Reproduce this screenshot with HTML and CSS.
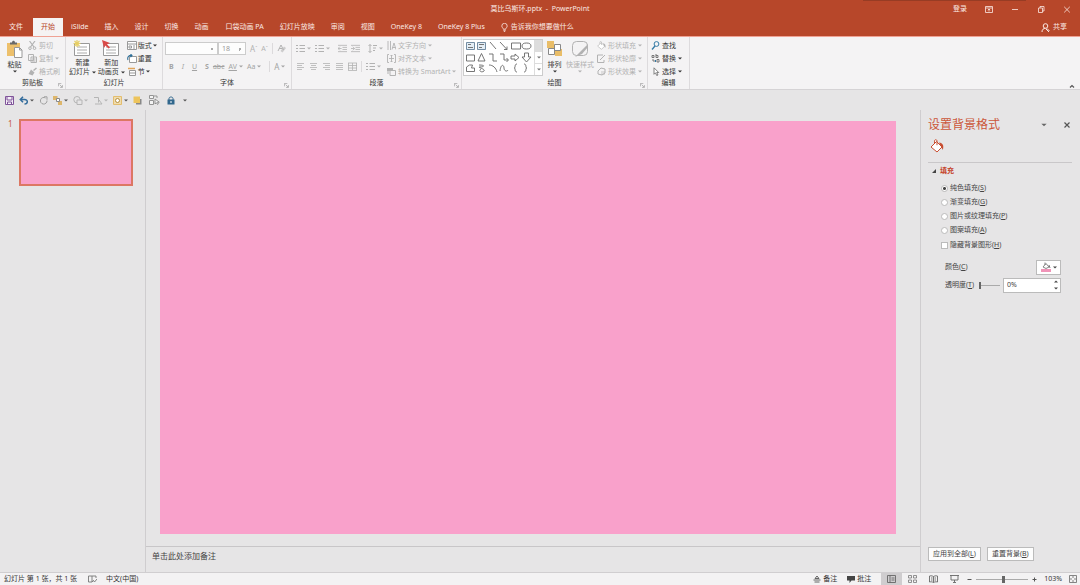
FILE: index.html
```html
<!DOCTYPE html>
<html lang="zh-CN">
<head>
<meta charset="utf-8">
<title>莫比乌斯环.pptx - PowerPoint</title>
<link rel="stylesheet" href="styles.css">
</head>
<body>
<svg class="sprite" aria-hidden="true">
  <symbol id="caret" viewBox="0 0 4 3"><path d="M0 .5h4L2 2.5z" fill="currentColor"/></symbol>
  <symbol id="launch" viewBox="0 0 6 6"><path d="M.5 4V.5H4M2 2l3 3M5.300 2.500v2.800H2.500" fill="none" stroke="currentColor" stroke-width=".8"/></symbol>
  <symbol id="list" viewBox="0 0 9 9"><path d="M0 1.500h2M0 4.500h2M0 7.500h2M3.500 1.500H9M3.500 4.500H9M3.500 7.500H9" fill="none" stroke="currentColor"/></symbol>
  <symbol id="left" viewBox="0 0 9 9"><path d="M1 1.500h7M1 3.500h5M1 5.500h7M1 7.500h5" fill="none" stroke="currentColor" stroke-width=".8"/></symbol>
  <symbol id="center" viewBox="0 0 9 9"><path d="M1 1.500h7M2 3.500h5M1 5.500h7M2 7.500h5" fill="none" stroke="currentColor" stroke-width=".8"/></symbol>
  <symbol id="right" viewBox="0 0 9 9"><path d="M1 1.500h7M3 3.500h5M1 5.500h7M3 7.500h5" fill="none" stroke="currentColor" stroke-width=".8"/></symbol>
  <symbol id="just" viewBox="0 0 9 9"><path d="M1 1.500h7M1 3.500h7M1 5.500h7M1 7.500h7" fill="none" stroke="currentColor" stroke-width=".8"/></symbol>
  <symbol id="dist" viewBox="0 0 9 9"><path d="M0 1h9M0 3.500h9M0 6h9M0 8.500h9M.5 1v7M4.500 1v7M8.500 1v7" fill="none" stroke="currentColor" stroke-width=".8"/></symbol>
  <symbol id="indent" viewBox="0 0 10 9"><path d="M0 1h10M5 3.300h5M5 5.600h5M0 8h10M0 4.500h4M2 2.500l2 2-2 2" fill="none" stroke="currentColor" stroke-width=".9"/></symbol>
  <symbol id="outdent" viewBox="0 0 10 9"><path d="M0 1h10M5 3.300h5M5 5.600h5M0 8h10M0 4.500h4M2 2.500l-2 2 2 2" fill="none" stroke="currentColor" stroke-width=".9"/></symbol>
  <symbol id="bucket" viewBox="0 0 14 14"><path d="M1 8l5.500-5.500L12 8l-5 5zM4.500 4.500V2.200c0-2 2.500-2 2.500 0v4" fill="#fff" stroke="currentColor"/><path d="M9 3.500c4 .5 5 3 3.800 7.500L11 7.500z" fill="currentColor"/></symbol>
  <symbol id="slide" viewBox="0 0 18 17"><path d="M1.500 3.500h15v12h-15z" fill="#fff" stroke="#999"/><path d="M4 7h10M4 10h10M4 13h10" stroke="#aaa"/></symbol>
  <symbol id="shape" viewBox="0 0 9 9"><path d="M1 4l3-3 4 1v4L5 8 1 7z" fill="none" stroke="currentColor"/><path d="M4 4h4v4H4z" fill="currentColor" opacity=".35"/></symbol>
</svg>

<header class="top">
  <div class="titlebar">
    <span class="doc">莫比乌斯环.pptx &nbsp;-&nbsp; PowerPoint</span>
    <div class="window">
      <button>登录</button>
      <button aria-label="功能区显示选项"><svg width="8" height="7" viewBox="0 0 8 7"><path d="M.5.5h7v6h-7zM.5 2h7M4 5.500V3M2.800 4.200L4 3l1.200 1.200" fill="none" stroke="currentColor" stroke-width=".8"/></svg></button>
      <button aria-label="最小化"><svg width="8" height="7" viewBox="0 0 8 7"><path d="M1 3.500h6" stroke="currentColor" stroke-width=".8"/></svg></button>
      <button aria-label="还原"><svg width="8" height="7" viewBox="0 0 8 7"><path d="M1.500 2h4v4.500h-4zM3 2V.5h4V5H5.500" fill="none" stroke="currentColor" stroke-width=".8"/></svg></button>
      <button aria-label="关闭"><svg width="8" height="7" viewBox="0 0 8 7"><path d="M1.200.8l5.600 5.600M6.800.8L1.200 6.400" stroke="currentColor" stroke-width=".8"/></svg></button>
    </div>
  </div>
  <nav class="tabs">
    <a href="#">文件</a><a href="#" class="on">开始</a><a href="#">iSlide</a><a href="#">插入</a><a href="#">设计</a><a href="#">切换</a><a href="#">动画</a><a href="#" class="addin">口袋动画 PA</a><a href="#">幻灯片放映</a><a href="#">审阅</a><a href="#">视图</a><a href="#">OneKey 8</a><a href="#">OneKey 8 Plus</a>
    <a href="#" class="tell"><svg width="7" height="9" viewBox="0 0 7 9"><path d="M2.300 6.200C2.300 5 .8 4.600.8 3a2.700 2.700 0 0 1 5.400 0c0 1.600-1.500 2-1.500 3.200zM2.300 7.300h2.400M2.800 8.500h1.400" fill="none" stroke="currentColor" stroke-width=".8"/></svg>告诉我你想要做什么</a>
    <a href="#" class="share"><svg width="9" height="9" viewBox="0 0 9 9"><circle cx="4.500" cy="3" r="2.300" fill="none" stroke="currentColor"/><path d="M1 9c0-2.500 1.500-3.700 3.500-3.700M5 6l3 3M6 5.500L8.500 8" fill="none" stroke="currentColor"/></svg>共享</a>
  </nav>
</header>

<section class="ribbon">
  <div class="group clip">
    <div class="body">
      <button class="big"><svg width="17" height="18" viewBox="0 0 17 18"><path d="M1 3h13v13H1z" fill="#edc06c"/><path d="M4 4.500V2.500h2C6 0 9 0 9 2.500h2v2z" fill="#696969"/><path d="M8.500 7.500h5l2.500 2.500v7.500H8.500z" fill="#fff" stroke="#999"/><path d="M13.500 7.500V10H16" fill="none" stroke="#999"/></svg><span>粘贴</span><svg class="car"><use href="#caret"/></svg></button>
      <div class="col off">
        <button><svg width="9" height="9" viewBox="0 0 9 9"><path d="M1.500 0L6 6M7 0L2.500 6" stroke="currentColor" stroke-width="1.200"/><circle cx="2" cy="7.200" r="1.300" fill="none" stroke="currentColor"/><circle cx="6.500" cy="7.200" r="1.300" fill="none" stroke="currentColor"/></svg>剪切</button>
        <button><svg width="9" height="9" viewBox="0 0 9 9"><path d="M.5.5h5v6h-5zM3 3h5.500v5.500H3zM4 5h3.500M4 7h3.500" fill="none" stroke="currentColor"/></svg>复制 <svg class="car"><use href="#caret"/></svg></button>
        <button><svg width="9" height="9" viewBox="0 0 9 9"><path d="M8.500 1L5.500 3.500" stroke="currentColor" stroke-width="1.600"/><path d="M3 2.500l3.500 3-2 3L.5 7z" fill="currentColor"/></svg>格式刷</button>
      </div>
    </div>
    <footer>剪贴板<svg class="launch"><use href="#launch"/></svg></footer>
  </div>
  <div class="group slides">
    <div class="body">
      <button class="big"><svg width="18" height="17" viewBox="0 0 18 17"><use href="#slide"/><path d="M4 0v7M.5 3.500h7M1.500 1l5 5M6.500 1l-5 5" stroke="#e7cf65" stroke-width="1.200"/></svg><span>新建<br>幻灯片 <svg class="car"><use href="#caret"/></svg></span></button>
      <button class="big"><svg width="18" height="17" viewBox="0 0 18 17"><use href="#slide"/><path d="M0 0l8 3-3 1.200 3 3.300-1.500 1L3.500 5.500 2 8z" fill="#d94a48"/></svg><span>新加<br>动画页 <svg class="car"><use href="#caret"/></svg></span></button>
      <div class="col">
        <button><svg width="10" height="9" viewBox="0 0 10 9"><path d="M.5.5h9v8h-9zM.5 3h9M2 5h2.500v2H2zM6 5h2M6 7h2" fill="#fff" stroke="#999"/></svg>版式<svg class="car"><use href="#caret"/></svg></button>
        <button><svg width="10" height="9" viewBox="0 0 10 9"><path d="M2.500 2.500h7v6h-7z" fill="#fff" stroke="#999"/><path d="M1 6C0 3 2 1 5 1.500M3.500 0L5 1.500 3.500 3.200" fill="none" stroke="#2f7099" stroke-width="1.100"/></svg>重置</button>
        <button><svg width="10" height="9" viewBox="0 0 10 9"><path d="M2.500 3.500h6v5h-6zM2.500 6h6" fill="#fff" stroke="#999"/><path d="M1 1.500h7" stroke="#e1a45b" stroke-width="1.500"/></svg>节<svg class="car"><use href="#caret"/></svg></button>
      </div>
    </div>
    <footer>幻灯片</footer>
  </div>
  <div class="group font">
    <div class="body stack off">
      <div class="row">
        <select class="face" aria-label="字体"><option></option></select><select class="size" aria-label="字号"><option>18</option></select>
        <button class="lg">A<sup>ˆ</sup></button><button>A<sup>ˇ</sup></button><i class="sep"></i>
        <button aria-label="清除格式"><svg width="9" height="9" viewBox="0 0 9 9"><path d="M1 7l3-6 2.500 5M2 4.500h3" fill="none" stroke="currentColor"/><path d="M3.500 7L7 2.500l2 1.500-3.500 4.500z" fill="currentColor" opacity=".6"/></svg></button>
      </div>
      <div class="row letters">
        <button><b>B</b></button><button><i>I</i></button><button><u>U</u></button><button><b>S</b></button><button><s>abc</s></button><button><u>AV</u><svg class="car"><use href="#caret"/></svg></button><button>Aa<svg class="car"><use href="#caret"/></svg></button><i class="sep"></i><button class="lg">A <svg class="car"><use href="#caret"/></svg></button>
      </div>
    </div>
    <footer>字体<svg class="launch"><use href="#launch"/></svg></footer>
  </div>
  <div class="group para">
    <div class="body off">
      <div class="stack">
        <div class="row">
          <button aria-label="项目符号"><svg class="ic"><use href="#list"/></svg><svg class="car"><use href="#caret"/></svg></button>
          <button aria-label="编号"><svg class="ic"><use href="#list"/></svg><svg class="car"><use href="#caret"/></svg></button><i class="sep"></i>
          <button aria-label="减少缩进"><svg class="ic"><use href="#outdent"/></svg></button>
          <button aria-label="增加缩进"><svg class="ic"><use href="#indent"/></svg></button><i class="sep"></i>
          <button aria-label="行距"><svg width="9" height="9" viewBox="0 0 9 9"><path d="M2 .5v8M.5 2L2 .5 3.500 2M.5 7L2 8.500 3.500 7M5 1.500h4M5 4h3M5 6.500h2" fill="none" stroke="currentColor"/></svg><svg class="car"><use href="#caret"/></svg></button>
        </div>
        <div class="row">
          <button aria-label="左对齐"><svg class="ic"><use href="#left"/></svg></button><button aria-label="居中"><svg class="ic"><use href="#center"/></svg></button><button aria-label="右对齐"><svg class="ic"><use href="#right"/></svg></button><button aria-label="两端对齐"><svg class="ic"><use href="#just"/></svg></button><button aria-label="分散对齐"><svg class="ic"><use href="#dist"/></svg></button><i class="sep"></i><button aria-label="分栏"><svg class="ic"><use href="#list"/></svg><svg class="car"><use href="#caret"/></svg></button>
        </div>
      </div>
      <div class="col">
        <button><svg width="9" height="9" viewBox="0 0 9 9"><path d="M1 0v9M3.500 0v9M5 8.500L7 2l2 6.500M5.500 6.500h3" fill="none" stroke="currentColor" stroke-width=".9"/></svg>文字方向<svg class="car"><use href="#caret"/></svg></button>
        <button><svg width="9" height="9" viewBox="0 0 9 9"><path d="M2 .5H.5v8H2M7 .5h1.500v8H7M2 4.500h5M4.500 1v7M3.500 2l1-1 1 1M3.500 7l1 1 1-1" fill="none" stroke="currentColor" stroke-width=".9"/></svg>对齐文本<svg class="car"><use href="#caret"/></svg></button>
        <button><svg width="9" height="9" viewBox="0 0 9 9"><path d="M0 1h6v3H0z" fill="currentColor"/><path d="M3 4v4.500h5.500V3.500H5M1 4v3" fill="none" stroke="currentColor"/></svg>转换为 SmartArt<svg class="car"><use href="#caret"/></svg></button>
      </div>
    </div>
    <footer>段落<svg class="launch"><use href="#launch"/></svg></footer>
  </div>
  <div class="group draw">
    <div class="body">
      <div class="gallery">
        <svg width="70" height="35" viewBox="0 0 70 35" fill="none" stroke="#666" stroke-width=".9">
          <path d="M2.500 2.500h8v7h-8zM13.500 2.500h8v7h-8z" fill="#e4eef6" stroke="#67829a"/><path d="M4 4.500h3M4 7.500h5M15 4.500h5M15 7.500h3"/>
          <path d="M26 2l6 7M36 2l7 7.500M43 6.500v3h-3M47.500 3h9v6h-9z"/><ellipse cx="62.500" cy="6" rx="4.500" ry="3"/>
          <path d="M2.500 15h8v6h-8zM17.500 13.500L21 21h-7zM25 14h4v7h4M36 14h4v6h4M42.500 18l2 2-2 2M47 16h4v-2l4 3.500-4 3.500v-2h-4zM60.500 13h4v4H67l-4.500 5-4.500-5h2.500z"/>
          <path d="M2.500 31.500V27l3-2h3l-1 3h3v3.500zM15 25c7 0 5 2 1 2s6 2 4 4-6 0-3-2M25 25c4 0 7 3 8 7M36 31c1-8 4-6 4-3s3 4 4 2M53 24c-3 0-1 4-3 4 2 0 0 4 3 4M60 24c3 0 1 4 3 4-2 0 0 4-3 4"/>
        </svg>
        <div class="scroll"><button aria-label="上一行"></button><button aria-label="下一行"><svg class="car"><use href="#caret"/></svg></button><button aria-label="更多"><svg class="car"><use href="#caret"/></svg></button></div>
      </div>
      <button class="big"><svg width="17" height="18" viewBox="0 0 17 18"><path d="M1 1h7v7H1zM9 9h7v7H9z" fill="#e9bd68"/><path d="M8.500 4.500h6v6h-6zM2.500 8.500h6v6h-6z" fill="#fff" stroke="#888"/></svg><span>排列</span><svg class="car"><use href="#caret"/></svg></button>
      <button class="big off"><svg width="18" height="18" viewBox="0 0 18 18"><rect x="1.500" y="1.500" width="15" height="14" rx="4" fill="none" stroke="currentColor"/><path d="M17 4L9 12l-5 5 7-3 6-7z" fill="currentColor"/></svg><span>快速样式</span><svg class="car"><use href="#caret"/></svg></button>
      <div class="col off">
        <button><svg width="9" height="9"><use href="#bucket"/></svg>形状填充<svg class="car"><use href="#caret"/></svg></button>
        <button><svg width="9" height="9" viewBox="0 0 9 9"><path d="M6 1H.5v7.500H7V6M3 6l5-5" fill="none" stroke="currentColor"/></svg>形状轮廓<svg class="car"><use href="#caret"/></svg></button>
        <button><svg width="9" height="9"><use href="#shape"/></svg>形状效果<svg class="car"><use href="#caret"/></svg></button>
      </div>
    </div>
    <footer>绘图<svg class="launch"><use href="#launch"/></svg></footer>
  </div>
  <div class="group edit">
    <div class="body"><div class="col">
      <button><svg width="9" height="9" viewBox="0 0 9 9"><circle cx="5.500" cy="3" r="2.400" fill="none" stroke="#337aa5"/><path d="M4 5L1 8.500" stroke="#337aa5" stroke-width="1.300"/></svg>查找</button>
      <button><svg width="9" height="9" viewBox="0 0 9 9"><path d="M1 3.500V1.500h2v2zM5 0v3.500h2v-2H5M2 5v2h2M6 5.500h2v2.500H6z" fill="none" stroke="#777"/><path d="M4 6l1 1-1 1" stroke="#337aa5" fill="none"/></svg>替换 <svg class="car"><use href="#caret"/></svg></button>
      <button><svg width="9" height="9" viewBox="0 0 9 9"><path d="M3 .8v6.500l1.500-1.500 1.200 2.700L7 8 5.700 5.500h2z" fill="#fff" stroke="#666" stroke-width=".8"/></svg>选择<svg class="car"><use href="#caret"/></svg></button>
    </div></div>
    <footer>编辑</footer>
  </div>
  <button class="collapse" aria-label="折叠功能区"><svg width="6" height="4" viewBox="0 0 6 4"><path d="M1 3.500l2-2 2 2" fill="none" stroke="#555" stroke-width="1.200"/></svg></button>
</section>

<div class="quick">
  <button aria-label="保存"><svg width="9" height="9" viewBox="0 0 9 9"><path d="M.5.500h8v8h-8z" fill="#f4eef7" stroke="#80549a"/><path d="M2 1v3h5V1M2.500 8.500V6h4v2.500" fill="none" stroke="#80549a"/></svg></button>
  <button aria-label="撤消"><svg width="10" height="9" viewBox="0 0 10 9"><path d="M1.500 3.500h4c4 0 3.500 4.500 0 4.500M4 .8L1.300 3.500 4 6.200" fill="none" stroke="#336c9c" stroke-width="1.500"/></svg><svg class="car"><use href="#caret"/></svg></button>
  <button aria-label="重复"><svg width="9" height="9" viewBox="0 0 9 9"><path d="M6.500 2A3.300 3.300 0 1 0 8 4.500M5 .8h3v3" fill="none" stroke="#a0a0a0"/></svg></button>
  <button aria-label="排列"><svg width="10" height="9" viewBox="0 0 10 9"><path d="M0 0h4.500v4H0zM5 5h4v4H5z" fill="#ddb66c"/><path d="M3.500 2.500h3v3h-3z" fill="#fff" stroke="#888"/></svg><svg class="car"><use href="#caret"/></svg></button>
  <button class="off" aria-label="合并形状"><svg width="10" height="9" viewBox="0 0 10 9"><circle cx="4" cy="3.700" r="3.200" fill="none" stroke="currentColor"/><path d="M4 4h5v4.500H4z" fill="#e6e5e6" stroke="currentColor"/></svg><svg class="car"><use href="#caret"/></svg></button>
  <button class="off" aria-label="旋转"><svg width="10" height="9" viewBox="0 0 10 9"><path d="M1 1.500h4.500v5M6 4l3 4H2" fill="none" stroke="currentColor"/></svg><svg class="car"><use href="#caret"/></svg></button>
  <button aria-label="动画"><svg width="10" height="9" viewBox="0 0 10 9"><path d="M.5.5h8v8h-8z" fill="#efdcae" stroke="#e3bd6e"/><circle cx="4.500" cy="4.500" r="2" fill="#fff" stroke="#b7903f"/></svg><svg class="car"><use href="#caret"/></svg></button>
  <button aria-label="置于顶层"><svg width="9" height="9" viewBox="0 0 9 9"><path d="M3 3h5.500v5.500H3z" fill="#888"/><path d="M.5.500h6.500v6.500H.5z" fill="#edc45c"/></svg></button>
  <button aria-label="选择窗格"><svg width="11" height="10" viewBox="0 0 11 10"><path d="M.5.500h4v3h-4zM.5 5.500h4v4h-4zM5 1h3v2M6 4v5l1.300-1.300L8.500 9.500l.8-.5-.8-1.800h1.800z" fill="#f4f4f4" stroke="#8a8a8a" stroke-width=".9"/></svg></button>
  <button aria-label="锁定"><svg width="8" height="9" viewBox="0 0 8 9"><path d="M2 4V2.500c0-2 4-2 4 0V4" fill="none" stroke="#31678d"/><path d="M.5 3.500h7v5h-7z" fill="#31678d"/><path d="M4 5v2" stroke="#fff"/></svg></button>
  <button aria-label="自定义快速访问工具栏"><svg class="car"><use href="#caret"/></svg></button>
</div>

<main>
  <aside class="thumbs"><span>1</span><div class="thumb"></div></aside>
  <section class="editor">
    <div class="canvas"><div class="page"></div></div>
    <div class="notes">单击此处添加备注</div>
  </section>
  <aside class="pane">
    <div class="head"><h2>设置背景格式</h2><button aria-label="窗格选项"><svg width="6" height="4"><use href="#caret"/></svg></button><button aria-label="关闭窗格"><svg width="6" height="6" viewBox="0 0 6 6"><path d="M.5.500l5 5M5.500.500l-5 5" stroke="#555" stroke-width="1.200"/></svg></button></div>
    <div class="kind"><svg width="14" height="14"><use href="#bucket"/></svg></div>
    <h3><svg width="4" height="4" viewBox="0 0 4 4"><path d="M4 0v4H0z" fill="#444"/></svg>填充</h3>
    <div class="options">
      <label><input type="radio" name="fill" checked>纯色填充(<u>S</u>)</label>
      <label><input type="radio" name="fill">渐变填充(<u>G</u>)</label>
      <label><input type="radio" name="fill">图片或纹理填充(<u>P</u>)</label>
      <label><input type="radio" name="fill">图案填充(<u>A</u>)</label>
      <label><input type="checkbox">隐藏背景图形(<u>H</u>)</label>
    </div>
    <div class="field"><label for="color">颜色(<u>C</u>)</label><button id="color" class="color"><svg width="10" height="10" viewBox="0 0 10 10"><path d="M2 5l3-3.500L8 5 5 6.500zM4 3V.5" fill="#fff" stroke="#777" stroke-width=".9"/><path d="M8 3l1 3" stroke="#777"/><path d="M0 7h10v3H0z" fill="#f094b8"/></svg><svg class="car"><use href="#caret"/></svg></button></div>
    <div class="field"><label for="alpha">透明度(<u>T</u>)</label><input id="alpha" type="range" value="0"><div class="spin"><input type="text" value="0%" aria-label="透明度值"><span><svg class="car up"><use href="#caret"/></svg><svg class="car"><use href="#caret"/></svg></span></div></div>
    <div class="actions"><button>应用到全部(<u>L</u>)</button><button>重置背景(<u>B</u>)</button></div>
  </aside>
</main>

<footer class="status">
  <span class="count">幻灯片 第 1 张，共 1 张</span>
  <svg width="9" height="8" viewBox="0 0 9 8"><path d="M4 1H.5v6H4zM4 1h4v2M4 7l1-1M5 5l1.500 2L9 4" fill="none" stroke="#777" stroke-width=".9"/></svg>
  <span class="lang">中文(中国)</span>
  <button><svg width="8" height="8" viewBox="0 0 8 8"><path d="M.5 5h7M1.500 7h5M4 1L2 3.500h4z" fill="none" stroke="#555" stroke-width=".9"/></svg>备注</button>
  <button class="comment"><svg width="8" height="8" viewBox="0 0 8 8"><path d="M0 1h8v4.500H4.500L2.500 8V5.500H0z" fill="#444"/></svg>批注</button>
  <div class="views">
    <button class="on" aria-label="普通视图"><svg width="9" height="8" viewBox="0 0 9 8"><path d="M.5.500h8v7h-8zM3 .5v7M4.500 3h3M4.500 5h3" fill="none" stroke="#666" stroke-width=".9"/></svg></button>
    <button aria-label="幻灯片浏览"><svg width="9" height="8" viewBox="0 0 9 8"><path d="M.5.500h3v2.500h-3zM5.500.500h3v2.500h-3zM.5 5h3v2.500h-3zM5.500 5h3v2.500h-3z" fill="none" stroke="#777" stroke-width=".8"/></svg></button>
    <button aria-label="阅读视图"><svg width="9" height="8" viewBox="0 0 9 8"><path d="M.5 1c2-.5 3 0 4 .5 1-.5 2-1 4-.5v6c-2-.5-3 0-4 .5-1-.5-2-1-4-.5zM4.500 1.500v6M2 3h1.500M2 5h1.500M5.500 3H7M5.500 5H7" fill="none" stroke="#666" stroke-width=".9"/></svg></button>
    <button aria-label="幻灯片放映"><svg width="9" height="8" viewBox="0 0 9 8"><path d="M0 .5h9M1 .5V5h7V.5M4.500 5v2M3 7.500h3" fill="none" stroke="#666" stroke-width=".9"/></svg></button>
  </div>
  <div class="zoom"><button aria-label="缩小"><svg width="5" height="5" viewBox="0 0 5 5"><path d="M.5 2.500h4" stroke="#555"/></svg></button><input type="range" value="52" aria-label="显示比例"><button aria-label="放大"><svg width="5" height="5" viewBox="0 0 5 5"><path d="M.5 2.500h4M2.500.500v4" stroke="#555"/></svg></button></div>
  <span>103%</span>
  <button class="fit" aria-label="适应窗口"><svg width="8" height="8" viewBox="0 0 8 8"><path d="M.5.500h7v7h-7zM4 1v2M4 5v2M1 4h2M5 4h2" fill="none" stroke="#777" stroke-width=".9"/></svg></button>
</footer>
</body>
</html>
```

FILE: styles.css
```css
* { box-sizing: border-box; }
html, body { height: 100%; }
body {
  margin: 0;
  display: flex;
  flex-direction: column;
  background: #e6e5e6;
  color: #444;
  font: 7px/10px "Noto Sans", "Noto Sans CJK SC", sans-serif;
  overflow: hidden;
}
.sprite { position: absolute; width: 0; height: 0; }
svg { flex: none; display: block; }
button {
  display: flex;
  align-items: center;
  margin: 0;
  padding: 0;
  border: 0;
  background: none;
  color: inherit;
  font: inherit;
  white-space: nowrap;
}
a { color: inherit; text-decoration: none; }
.car { display: inline-block; width: 4px; height: 3px; margin-left: 2px; }
.off { color: #b2b2b2; }

.top { background: #b7472a; color: #fbeae5; }
.titlebar {
  display: grid;
  grid-template-columns: 1fr auto 1fr;
  align-items: center;
  height: 18px;
  background: linear-gradient(#973c24, #973c24) calc(100% - 54px) 0 / 163px 1px no-repeat;
}
.doc { grid-column: 2; }
.window { display: flex; justify-content: flex-end; gap: 18px; padding-right: 9px; }
.tabs { display: flex; align-items: stretch; height: 18px; padding-left: 1px; line-height: 18px; white-space: nowrap; }
.tabs a { padding: 0 8px; }
.tabs .on { margin-left: 2px; background: #f5f3f3; color: #b7472a; }
.tabs .addin { margin-left: 1px; }
.tabs .tell, .tabs .share { display: flex; align-items: center; gap: 3px; }
.tabs .share { margin-left: auto; padding-right: 13px; }

.ribbon {
  display: flex;
  height: 54px;
  background: #f4f3f4;
  border-top: 1px solid #efa294;
  border-bottom: 1px solid #d5d3d5;
}
.group { display: flex; flex-direction: column; border-right: 1px solid #dddbdd; }
.body { display: flex; flex: 1; min-height: 0; padding-top: 2px; }
.group footer { position: relative; flex: none; height: 11px; line-height: 10px; text-align: center; color: #333; }
.launch { position: absolute; right: 2px; bottom: 1px; width: 5px; height: 5px; color: #999; }
.col { display: flex; flex-direction: column; }
.col button { height: 13px; gap: 2px; }
.col .car { margin-left: 0; }
.big { flex-direction: column; align-self: flex-start; padding-top: 1px; line-height: 9px; color: #333; }
.big > svg:first-child { margin-bottom: 1px; }
.big > .car { margin: 1px 0 0; }
.big span .car { margin: 0; vertical-align: middle; }
.big.off { color: #b2b2b2; }
.clip { width: 66px; }
.clip .body { padding-left: 6px; gap: 5px; }
.clip .big > span, .draw .big > span { padding-top: 1px; }
.slides { width: 97px; }
.slides .body { padding-left: 3px; gap: 2px; }
.slides .col { color: #333; }
.slides .col button { gap: 1px; }
.stack { display: flex; flex-direction: column; justify-content: flex-start; gap: 5px; }
.row { display: flex; align-items: center; height: 13px; gap: 4px; }
.sep { width: 1px; height: 11px; background: #dcdadc; }
.font { width: 129px; }
.font .body { flex-direction: column; padding: 5px 2px 0; }
.font select {
  appearance: none;
  height: 13px;
  padding: 0 3px;
  border: 1px solid #ccc;
  border-radius: 0;
  color: #999;
  font: inherit;
  background: linear-gradient(135deg, #aaa 50%, transparent 50%) calc(100% - 3px) 5px / 3px 3px no-repeat #fdfdfd;
}
.font .face { width: 53px; }
.font .size { width: 28px; margin-left: -4px; }
.font sup { font-size: 5px; line-height: 5px; }
.font .letters { padding-left: 4px; gap: 8px; color: #a3a3a3; }
.letters button:nth-child(n+5) { margin-left: -4px; }
.font .lg { font-size: 8px; }
.ic { width: 9px; height: 9px; }
.para { width: 170px; }
.para .body { gap: 5px; padding-left: 4px; }
.para .stack { width: 86px; padding-top: 3px; }
.draw { width: 186px; }
.draw .body { padding-left: 1px; gap: 3px; }
.gallery { display: flex; align-self: flex-start; height: 37px; border: 1px solid #ccc; background: #fff; }
.scroll { display: flex; flex-direction: column; width: 8px; border-left: 1px solid #ddd; }
.scroll button { flex: 1; justify-content: center; color: #777; }
.scroll button + button { border-top: 1px solid #ddd; }
.scroll button:first-child { background: #ddd; }
.scroll .car { margin: 0; }
.edit { width: 42px; color: #333; }
.edit .body { padding-left: 3px; }
.collapse { margin: auto 5px 1px auto; }

.quick { display: flex; align-items: center; gap: 5px; height: 20px; padding-left: 5px; color: #555; }
.quick .off { color: #b5b5b5; }
.quick .car { margin-left: 1px; }
.quick button:nth-child(n+9) { margin-left: 2px; }

main { display: grid; grid-template-columns: 146px 1fr 160px; flex: 1; min-height: 0; }
.thumbs { display: flex; align-items: flex-start; gap: 6px; padding: 9px 12px 0 8px; border-right: 1px solid #cfcdcf; color: #c75a3c; font-size: 8px; }
.thumb { flex: 1; aspect-ratio: 115 / 67; border: 2px solid #dc7763; background: #f9a1cb; }
.editor { display: flex; flex-direction: column; }
.canvas { flex: 1; display: flex; padding: 11px 24px 12px 14px; }
.page { flex: 1; background: #f9a1cb; }
.notes { height: 26px; padding: 4px 6px; border-top: 1px solid #c8c6c8; font-size: 8px; }
.pane { display: flex; flex-direction: column; padding: 9px 8px 11px 7px; border-left: 1px solid #cfcdcf; }
.head { display: flex; align-items: center; gap: 17px; height: 12px; padding-right: 2px; color: #666; }
.head h2 { flex: 1; margin: 0; color: #cb5639; font-size: 12px; line-height: 14px; font-weight: 400; white-space: nowrap; }
.kind { height: 32px; padding: 8px 2px; border-bottom: 1px solid #c9c7c9; color: #c84e31; }
.pane h3 { display: flex; align-items: center; gap: 4px; margin: 3px 0 5px; padding-left: 4px; color: #c5442a; font-size: 7px; line-height: 10px; }
.options label { display: flex; align-items: center; height: 14px; padding-left: 13px; }
.options input { appearance: none; width: 7px; height: 7px; margin: 0 2px 0 0; border: 1px solid #bbb; background: #fff; }
.options input[type="radio"] { border-radius: 50%; }
.options input:checked { background: radial-gradient(circle, #444 1px, #fff 2px); }
.options label:last-child { margin-top: 1px; }
.field { display: flex; align-items: center; height: 18px; padding: 0 11px 0 17px; }
.options + .field { margin-top: 6px; }
.field label { margin-right: auto; }
.color { justify-content: center; width: 25px; height: 15px; border: 1px solid #bbb; background: #fff; }
input[type="range"] { appearance: none; height: 7px; margin: 0; background: linear-gradient(#aaa, #aaa) 0 3px / 100% 1px no-repeat; }
input[type="range"]::-webkit-slider-thumb { appearance: none; width: 2px; height: 7px; background: #666; }
.field input[type="range"] { width: 21px; margin-right: 3px; }
.spin { display: flex; align-items: center; width: 58px; height: 15px; border: 1px solid #bbb; background: #fff; }
.spin input { flex: 1; min-width: 0; padding: 0 3px; border: 0; background: none; color: inherit; font: inherit; }
.spin span { display: flex; flex-direction: column; gap: 4px; padding-right: 2px; }
.spin .up { transform: rotate(180deg); }
.actions { display: flex; gap: 6px; margin-top: auto; }
.actions button { height: 14px; padding: 0 4px; border: 1px solid #bbb; background: #fdfdfd; }

.status { display: flex; align-items: center; height: 13px; padding: 0 3px 0 4px; border-top: 1px solid #d0ced0; background: #f3f2f3; white-space: nowrap; color: #333; }
.status > svg { margin: 0 9px 0 11px; }
.status .lang { margin-right: auto; }
.status button { gap: 2px; }
.comment { margin: 0 10px; }
.views { display: flex; align-self: stretch; }
.views button { justify-content: center; width: 21px; }
.views .on { background: #cfcdcf; }
.zoom { display: flex; align-items: center; gap: 4px; margin: 0 7px 0 2px; }
.zoom input { width: 52px; }
.zoom input::-webkit-slider-thumb { width: 3px; }
.fit { margin-left: 7px; }
```
